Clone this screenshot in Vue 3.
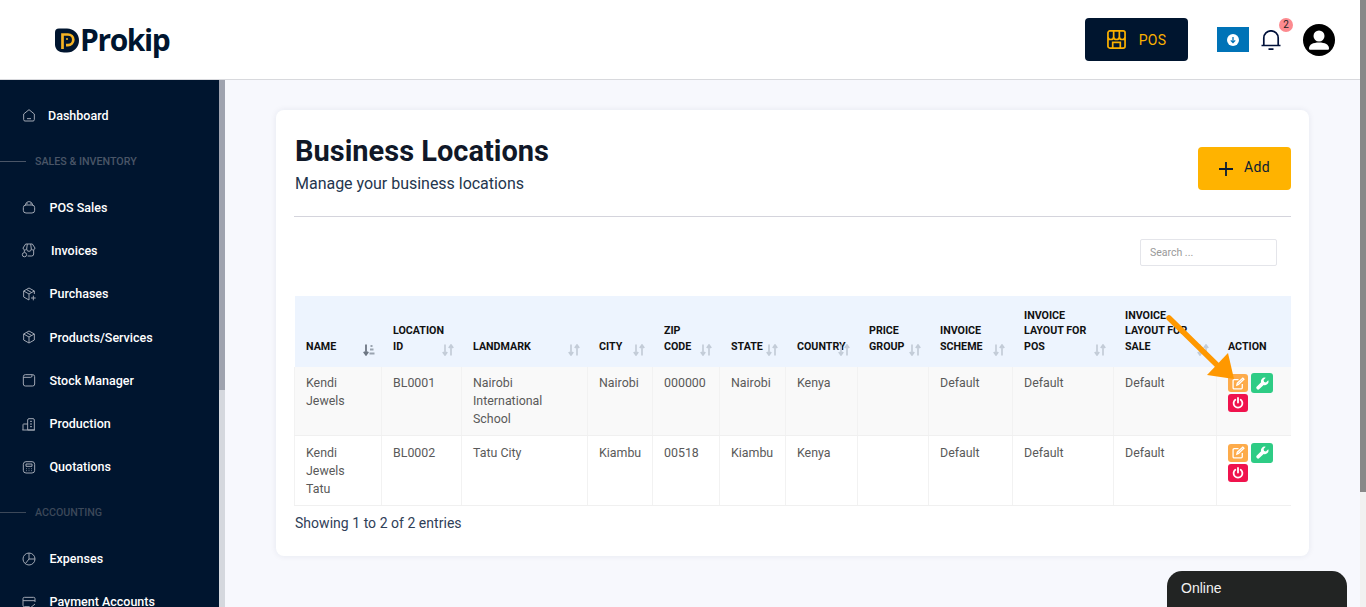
<script setup>
const navTop = { label: 'Dashboard', cls: 'tight', d: 'M4 10.500 12 4l8 6.500V19a2 2 0 0 1-2 2H6a2 2 0 0 1-2-2zM9 17.500h6' }
const navSales = [
  { label: 'POS Sales', cls: '', d: 'M3.500 13a4 4 0 0 1 4-4h9a4 4 0 0 1 4 4v4a4 4 0 0 1-4 4h-9a4 4 0 0 1-4-4zM6.500 9.500C7 6 9 4 12 4s5 2 5.500 5.500M9 8V5M15 8V5' },
  { label: 'Invoices', cls: 'wide', d: 'M7 3h10l4 6a3 3 0 0 1-5.500 1.500 3.500 3.500 0 0 1-7 0A3 3 0 0 1 3 9zM9.500 3 8.500 10.500M14.500 3l1 7.500M5 12v3M19 12v6a3 3 0 0 1-3 3H10M2 19a3.200 3.200 0 1 0 6.400 0 3.200 3.200 0 1 0-6.400 0z' },
  { label: 'Purchases', cls: '', d: 'M12 3l8 4.500V12M12 3 4 7.500v9l8 4.500M4 7.500l8 4.500 8-4.500M12 12v9M8 5.200l8 4.600M15 18h7M18.500 14.500v7' },
  { label: 'Products/Services', cls: '', d: 'M12 3l8 4.500v9L12 21l-8-4.500v-9zM4 7.500l8 4.500 8-4.500M12 12v9M8 5.200l8 4.600' },
  { label: 'Stock Manager', cls: '', d: 'M3.500 7a3 3 0 0 1 3-3h11a3 3 0 0 1 3 3v11a3 3 0 0 1-3 3h-11a3 3 0 0 1-3-3zM3.500 8h11a2 2 0 0 0 2-2V4' },
  { label: 'Production', cls: '', d: 'M10 21V6a2 2 0 0 1 2-2h6a2 2 0 0 1 2 2v15zM3 21v-8a1 1 0 0 1 1-1h6M2 21h19M13.500 8h3M13.500 12h3M13.500 16h3' },
  { label: 'Quotations', cls: '', d: 'M3.500 8a4 4 0 0 1 4-4h9a4 4 0 0 1 4 4v9a4 4 0 0 1-4 4h-9a4 4 0 0 1-4-4zM7.500 7.500h9v3.500h-9zM8 14.500h1M11.500 14.500h1M15 14.500h1M8 17.500h1M11.500 17.500h1M15 17.500h1' }
]
const navAccounting = [
  { label: 'Expenses', cls: '', d: 'M21 12a9 9 0 1 1-9-9 9 9 0 0 1 9 9zM12 3v9h9M12 12l-5.500 7' },
  { label: 'Payment Accounts', cls: '', d: 'M3 7a2 2 0 0 1 2-2h14a2 2 0 0 1 2 2v5M3 7v10a2 2 0 0 0 2 2h8M3 10h18M15 20l6-5' }
]
const columns = [
  { label: 'Name', active: true }, { label: 'Location ID' }, { label: 'Landmark' }, { label: 'City' },
  { label: 'Zip Code' }, { label: 'State' }, { label: 'Country' }, { label: 'Price Group' },
  { label: 'Invoice Scheme' }, { label: 'Invoice Layout For POS' }, { label: 'Invoice Layout For Sale' }
]
const rows = [
  ['Kendi Jewels', 'BL0001', 'Nairobi International School', 'Nairobi', '000000', 'Nairobi', 'Kenya', '', 'Default', 'Default', 'Default'],
  ['Kendi Jewels Tatu', 'BL0002', 'Tatu City', 'Kiambu', '00518', 'Kiambu', 'Kenya', '', 'Default', 'Default', 'Default']
]
</script>

<template>
  <div class="page">
    <div class="content">
      <header class="topbar">
        <div class="logo">
          <svg class="logo-mark" viewBox="0 0 24 24" width="24" height="25" aria-hidden="true">
            <path d="M4 0h8a12 12 0 0 1 0 24H9C4 24 0 21 0 16V4a4 4 0 0 1 4-4z" fill="#00152f" />
            <path d="M7.500 20.500V6h5.500a5.300 5.300 0 0 1 0 10.600H11" fill="none" stroke="#f5b324" stroke-width="2.700" />
            <path d="M11 10.500h2" fill="none" stroke="#f5b324" stroke-width="1.500" />
          </svg>
          <span class="logo-text">Prokip</span>
        </div>
        <div class="top-actions">
          <button class="pos-btn" type="button">
            <svg viewBox="0 0 20 20" width="19" height="19" fill="none" stroke="#fbb000" stroke-width="1.800" aria-hidden="true">
              <path d="M3 1h14a2 2 0 0 1 2 2v14a2 2 0 0 1-2 2H3a2 2 0 0 1-2-2V3a2 2 0 0 1 2-2zM1 7a3 3 0 0 0 6 0 3 3 0 0 0 6 0 3 3 0 0 0 6 0M7 1v6M13 1v6M6 19v-6h8v6" />
            </svg>
            <span>POS</span>
          </button>
          <div class="download">
            <svg viewBox="0 0 12 12" width="12" height="12" aria-hidden="true">
              <circle cx="6" cy="6" r="6" fill="#fff" />
              <path d="M6 3v5.500M3.800 6.400 6 8.600l2.200-2.200" fill="none" stroke="#0073b7" stroke-width="1.300" />
            </svg>
          </div>
          <div class="bell">
            <svg viewBox="0 0 20 20" width="20" height="20" fill="none" stroke="#00113a" stroke-width="1.700" aria-hidden="true">
              <path d="M.5 15.500h19M2.800 15.500V8a7.200 7.200 0 0 1 14.400 0v7.500M7.500 19.200h5" />
            </svg>
            <span class="badge">2</span>
          </div>
          <svg class="avatar" viewBox="0 0 32 32" width="32" height="32" aria-hidden="true">
            <circle cx="16" cy="16" r="16" fill="#000" />
            <circle cx="16" cy="12" r="5.500" fill="#fff" />
            <path d="M6 24.500c0-4 4-6 10-6s10 2 10 6c0 .8-.6 1.300-1.300 1.300H7.300C6.600 25.800 6 25.300 6 24.500z" fill="#fff" />
          </svg>
        </div>
      </header>

      <div class="body-row">
        <aside class="sidebar">
          <nav class="nav">
            <a class="nav-item">
              <svg class="nav-icon" viewBox="0 0 24 24" width="16" height="16"><path :d="navTop.d" /></svg>
              <span class="nav-label" :class="navTop.cls">{{ navTop.label }}</span>
            </a>
            <div class="section"><i class="rule"></i><span>SALES &amp; INVENTORY</span></div>
            <a v-for="item in navSales" :key="item.label" class="nav-item">
              <svg class="nav-icon" viewBox="0 0 24 24" width="16" height="16"><path :d="item.d" /></svg>
              <span class="nav-label" :class="item.cls">{{ item.label }}</span>
            </a>
            <div class="section dim"><i class="rule"></i><span>ACCOUNTING</span></div>
            <a v-for="item in navAccounting" :key="item.label" class="nav-item">
              <svg class="nav-icon" viewBox="0 0 24 24" width="16" height="16"><path :d="item.d" /></svg>
              <span class="nav-label">{{ item.label }}</span>
            </a>
          </nav>
        </aside>
        <div class="side-scroll"><div class="side-thumb"></div></div>

        <main class="main">
          <section class="card">
            <div class="card-head">
              <div class="head-text">
                <h1>Business Locations</h1>
                <p>Manage your business locations</p>
              </div>
              <button class="add-btn" type="button">
                <svg viewBox="0 0 14 14" width="14" height="14" aria-hidden="true">
                  <path d="M7 0v14M0 7h14" stroke="#0b1c33" stroke-width="1.800" fill="none" />
                </svg>
                <span>Add</span>
              </button>
            </div>
            <div class="search-row">
              <input class="search" type="text" placeholder="Search ..." />
            </div>
            <div class="table-wrap">
              <table>
                <thead>
                  <tr>
                    <th v-for="col in columns" :key="col.label">
                      {{ col.label }}
                      <svg class="sort" :class="{ on: col.active }" viewBox="0 0 12 12" width="12" height="12" aria-hidden="true">
                        <template v-if="col.active">
                          <path d="M3 .5v10M.8 7.800 3 10.800l2.200-3" fill="none" stroke="currentColor" stroke-width="1.800" />
                          <path d="M7.500 2h2M7 5.500h3.500M6.500 9.500h5" fill="none" stroke="#9aa3af" stroke-width="2" />
                        </template>
                        <template v-else>
                          <path d="M3 .5v10.500M.8 8 3 11l2.200-3M9 11.500V1M6.800 4 9 1l2.200 3" fill="none" stroke="currentColor" stroke-width="1.700" />
                        </template>
                      </svg>
                    </th>
                    <th class="no-sort">Action</th>
                  </tr>
                </thead>
                <tbody>
                  <tr v-for="row in rows" :key="row[1]">
                    <td v-for="(cell, i) in row" :key="i">{{ cell }}</td>
                    <td class="actions">
                      <button class="act edit" type="button">
                        <svg viewBox="0 0 12 12" width="13" height="13" fill="none" stroke="#fff" stroke-width="1.200" aria-hidden="true">
                          <path d="M9.500 6.500V10a1 1 0 0 1-1 1H2a1 1 0 0 1-1-1V3.500a1 1 0 0 1 1-1h4M4.500 7.500l.4-1.800L10 1l1 1-5 4.900z" />
                        </svg>
                      </button>
                      <button class="act tool" type="button">
                        <svg viewBox="0 0 12 12" width="13" height="13" aria-hidden="true">
                          <path d="M11.300 3 9.200 5l-1.700-.5L7 2.800 9 .8A3.300 3.300 0 0 0 4.700 4.900L.8 8.800a1.500 1.500 0 0 0 2.300 2.300L7.100 7.300A3.300 3.300 0 0 0 11.300 3z" fill="#fff" />
                        </svg>
                      </button>
                      <button class="act power" type="button">
                        <svg viewBox="0 0 12 12" width="12" height="12" fill="none" stroke="#fff" stroke-width="1.800" stroke-linecap="round" aria-hidden="true">
                          <path d="M6 1v4.500M3.300 2.800a4.400 4.400 0 1 0 5.400 0" />
                        </svg>
                      </button>
                    </td>
                  </tr>
                </tbody>
              </table>
            </div>
            <div class="entries">Showing 1 to 2 of 2 entries</div>
          </section>
          <svg class="arrow" viewBox="0 0 80 80" width="80" height="80" aria-hidden="true">
            <path d="M9 8 57 55" fill="none" stroke="#ff9800" stroke-width="5.500" stroke-linecap="round" />
            <path d="M74 69 47 65 68 43z" fill="#ff9800" />
          </svg>
        </main>
      </div>
    </div>
    <div class="page-scroll"><div class="page-thumb"></div></div>
    <div class="chat">Online</div>
  </div>
</template>

<style>
html, body { margin: 0; overflow: hidden; }
</style>

<style scoped>
.page {
  display: flex;
  height: 607px;
  overflow: hidden;
  position: relative;
  font-family: Roboto, "Liberation Sans", sans-serif;
  background: #fff;
}
.content { flex: 1; min-width: 0; display: flex; flex-direction: column; }
.page-scroll { width: 6px; background: #f1f1f1; }
.page-thumb { height: 492px; background: #888; }

.topbar {
  height: 79px;
  flex: none;
  box-sizing: content-box;
  border-bottom: 1px solid #d8d9dd;
  background: #fff;
  display: flex;
  align-items: center;
  justify-content: space-between;
  padding-left: 55px;
  padding-right: 25px;
}
.logo { display: flex; align-items: center; gap: 1px; margin-top: 1px; }
.logo-mark { display: block; }
.logo-text {
  font-family: "Open Sans", sans-serif;
  font-weight: 700;
  font-size: 30px;
  line-height: 34px;
  letter-spacing: -1.4px;
  color: #00152f;
  margin-top: -1px;
}
.top-actions { display: flex; align-items: center; }
.pos-btn {
  width: 103px;
  height: 43px;
  background: #00152f;
  border: 0;
  border-radius: 4px;
  display: flex;
  align-items: center;
  justify-content: center;
  gap: 13px;
  color: #fbb000;
  font: 400 14px Roboto, sans-serif;
  letter-spacing: .3px;
  margin-right: 29px;
  padding: 0;
}
.download {
  width: 32px;
  height: 25px;
  background: #0073b7;
  display: flex;
  align-items: center;
  justify-content: center;
  margin-right: 12px;
}
.bell { position: relative; width: 20px; height: 20px; margin-right: 22px; }
.bell svg { display: block; }
.badge {
  position: absolute;
  left: 18px;
  top: -12px;
  width: 14px;
  height: 14px;
  border-radius: 50%;
  background: #fc8a8f;
  color: #222;
  font-size: 10px;
  line-height: 14px;
  text-align: center;
}
.avatar { display: block; }

.body-row { flex: 1; min-height: 0; display: flex; }
.sidebar { width: 219px; flex: none; background: #00152f; overflow: hidden; }
.nav { padding-top: 13.600px; }
.nav-item {
  height: 43.300px;
  display: flex;
  align-items: center;
  padding-left: 20.500px;
  color: #fff;
}
.nav-icon {
  flex: none;
  fill: none;
  stroke: #a0a7b3;
  stroke-width: 1.500;
}
.nav-label { margin-left: 13px; font-size: 12.500px; font-weight: 500; white-space: nowrap; }
.nav-label.tight { margin-left: 11.500px; }
.nav-label.wide { margin-left: 14.500px; }
.section {
  height: 48.600px;
  display: flex;
  align-items: center;
  font-size: 10.700px;
  font-weight: 500;
  color: #4a5567;
}
.section.dim { height: 48.400px; color: #3c4859; }
.rule { width: 26px; height: 1px; background: #4a5567; margin-right: 9px; }
.section.dim .rule { background: #3c4859; }
.side-scroll { width: 6px; flex: none; background: #d5d8de; }
.side-thumb { height: 310px; background: #9fa3af; }

.main {
  flex: 1;
  min-width: 0;
  background: #f7f8fd;
  padding: 30px 51px 0;
  position: relative;
}
.card {
  height: 446px;
  box-sizing: border-box;
  background: #fff;
  border-radius: 8px;
  box-shadow: 0 0 6px rgba(30, 40, 80, .08);
  padding: 0 18px;
}
.card-head {
  height: 107px;
  box-sizing: border-box;
  display: flex;
  justify-content: space-between;
  align-items: flex-start;
  border-bottom: 1px solid #d4d4dc;
  padding-top: 25px;
}
.head-text { padding-left: 1px; }
h1 {
  margin: 0;
  font-size: 29px;
  line-height: 33px;
  font-weight: 700;
  color: #101828;
}
.card-head p {
  margin: 6px 0 0 0;
  font-size: 16px;
  line-height: 19px;
  color: #24364e;
  letter-spacing: -.02px;
}
.add-btn {
  width: 93px;
  height: 43px;
  margin-top: 12px;
  background: #ffb300;
  border: 0;
  border-radius: 4px;
  display: flex;
  align-items: center;
  justify-content: center;
  gap: 11px;
  color: #0b1c33;
  font: 400 14px Roboto, sans-serif;
  letter-spacing: .3px;
  padding: 0;
}
.add-btn span { margin-bottom: 3px; }
.search-row {
  height: 79px;
  display: flex;
  justify-content: flex-end;
  align-items: flex-start;
  padding-top: 22px;
  padding-right: 14px;
  box-sizing: border-box;
}
.search {
  width: 137px;
  height: 27px;
  box-sizing: border-box;
  border: 1px solid #e4e5ea;
  border-radius: 2px;
  padding: 0 9px;
  font: 400 10.500px Roboto, sans-serif;
  outline: none;
}
.search::placeholder { color: #999; opacity: 1; }
table {
  width: 996px;
  table-layout: fixed;
  border-collapse: collapse;
}
th {
  height: 71px;
  box-sizing: border-box;
  background: #edf4fe;
  color: #111;
  font-size: 10.700px;
  line-height: 15.500px;
  font-weight: 700;
  text-transform: uppercase;
  text-align: left;
  vertical-align: bottom;
  padding: 0 16px 13px 11.500px;
  position: relative;
}
th:nth-child(1) { width: 87px; }
th:nth-child(2) { width: 80px; }
th:nth-child(3) { width: 126px; }
th:nth-child(4) { width: 65px; }
th:nth-child(5) { width: 67px; }
th:nth-child(6) { width: 66px; }
th:nth-child(7) { width: 72px; }
th:nth-child(8) { width: 71px; }
th:nth-child(9) { width: 84px; }
th:nth-child(10) { width: 101px; }
th:nth-child(11) { width: 103px; }
th:nth-child(12) { width: 74px; }
th:nth-child(7) { padding-right: 0; }
.sort { position: absolute; right: 8px; bottom: 11px; color: #c3ccd8; }
.sort.on { color: #6d7683; right: 7px; }
tbody tr { height: 68px; }
tbody tr:nth-child(even) { height: 70px; }
tbody tr:nth-child(odd) { background: #f9f9f9; }
td {
  box-sizing: border-box;
  padding: 7px 12px 5px 11px;
  font-size: 12.400px;
  line-height: 18px;
  color: #5a5a5a;
  vertical-align: top;
  border-right: 1px solid #f2f2f2;
  border-bottom: 1px solid #f0f0f0;
  border-left: 1px solid #f2f2f2;
}
tbody tr:nth-child(even) td { padding-top: 8px; padding-bottom: 5px; }
.actions { padding: 6px 0 0 11px; line-height: 0; border-right: 0; }
tbody tr:nth-child(even) td.actions { padding-top: 7px; padding-bottom: 0; }
.act {
  border: 0;
  padding: 0;
  border-radius: 3px;
  display: inline-flex;
  align-items: center;
  justify-content: center;
  vertical-align: top;
}
.edit { width: 20px; height: 18px; margin: 1px 3px 1px 0; background: #fdab4a; }
.tool { width: 22px; height: 20px; background: #2ecc85; }
.power { width: 20px; height: 18px; margin-top: 1px; background: #f0134d; }
.entries {
  margin-top: 8px;
  padding-left: 1px;
  font-size: 14px;
  line-height: 18px;
  color: #2f4058;
  letter-spacing: .03px;
}
.arrow { position: absolute; left: 935px; top: 230px; }

.chat {
  position: absolute;
  left: 1167px;
  bottom: 0;
  width: 180px;
  height: 36px;
  box-sizing: border-box;
  background: #222423;
  border-radius: 15px 15px 0 0;
  padding: 9px 14px;
  color: #f2f2f2;
  font: 400 14px/17px "Liberation Sans", sans-serif;
}
</style>
